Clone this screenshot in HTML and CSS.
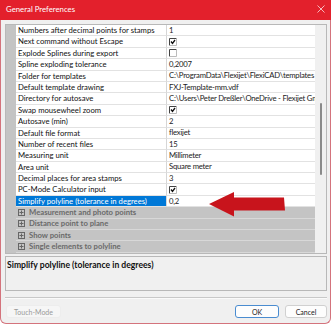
FILE: index.html
```html
<!DOCTYPE html>
<html lang="en">
  <head>
    <meta charset="UTF-8">
    <title>General Preferences</title>
    <link rel="stylesheet" href="styles.css">
  </head>
  <body>
    <div class="window">
        <div class="titlebar">
            <span>General Preferences</span>
            <svg class="close" width="8" height="8" viewBox="0 0 8 8"><path d="M0.5 0.5L7.5 7.5M7.5 0.5L0.5 7.5" stroke="#f6b8bd" stroke-width="1"/></svg>
        </div>
        <div class="content">
            <div class="grid">
                <div class="rows">
                    <div class="row"><div class="gut"></div><div class="name">Numbers after decimal points for stamps</div><div class="val">1</div></div>
                    <div class="row"><div class="gut"></div><div class="name">Next command without Escape</div><div class="val"><svg class="chk" width="8" height="8" viewBox="0 0 8 8"><path d="M0.5 7.5V0.5H7.5" stroke="#444" fill="none"/><path d="M7.5 0.5V7.5H0.5" stroke="#bbb" fill="none"/><path d="M2 3.5L3.5 5.5L6 2" stroke="#111" stroke-width="1.3" fill="none"/></svg></div></div>
                    <div class="row"><div class="gut"></div><div class="name">Explode Splines during export</div><div class="val"><svg class="chk" width="8" height="8" viewBox="0 0 8 8"><path d="M0.5 7.5V0.5H7.5" stroke="#444" fill="none"/><path d="M7.5 0.5V7.5H0.5" stroke="#bbb" fill="none"/></svg></div></div>
                    <div class="row"><div class="gut"></div><div class="name">Spline exploding tolerance</div><div class="val">0,2007</div></div>
                    <div class="row"><div class="gut"></div><div class="name">Folder for templates</div><div class="val">C:\ProgramData\Flexijet\FlexiCAD\templates</div></div>
                    <div class="row"><div class="gut"></div><div class="name">Default template drawing</div><div class="val">FXJ-Template-mm.vdf</div></div>
                    <div class="row"><div class="gut"></div><div class="name">Directory for autosave</div><div class="val">C:\Users\Peter Dreßler\OneDrive - Flexijet Gm</div></div>
                    <div class="row"><div class="gut"></div><div class="name">Swap mousewheel zoom</div><div class="val"><svg class="chk" width="8" height="8" viewBox="0 0 8 8"><path d="M0.5 7.5V0.5H7.5" stroke="#444" fill="none"/><path d="M7.5 0.5V7.5H0.5" stroke="#bbb" fill="none"/><path d="M2 3.5L3.5 5.5L6 2" stroke="#111" stroke-width="1.3" fill="none"/></svg></div></div>
                    <div class="row"><div class="gut"></div><div class="name">Autosave (min)</div><div class="val">2</div></div>
                    <div class="row"><div class="gut"></div><div class="name">Default file format</div><div class="val">flexijet</div></div>
                    <div class="row"><div class="gut"></div><div class="name">Number of recent files</div><div class="val">15</div></div>
                    <div class="row"><div class="gut"></div><div class="name">Measuring unit</div><div class="val">Millimeter</div></div>
                    <div class="row"><div class="gut"></div><div class="name">Area unit</div><div class="val">Square meter</div></div>
                    <div class="row"><div class="gut"></div><div class="name">Decimal places for area stamps</div><div class="val">3</div></div>
                    <div class="row"><div class="gut"></div><div class="name">PC-Mode Calculator input</div><div class="val"><svg class="chk" width="8" height="8" viewBox="0 0 8 8"><path d="M0.5 7.5V0.5H7.5" stroke="#444" fill="none"/><path d="M7.5 0.5V7.5H0.5" stroke="#bbb" fill="none"/><path d="M2 3.5L3.5 5.5L6 2" stroke="#111" stroke-width="1.3" fill="none"/></svg></div></div>
                    <div class="row selected"><div class="gut"></div><div class="name">Simplify polyline (tolerance in degrees)</div><div class="val">0,2</div></div>
                    <div class="row cat"><div class="gut"></div><div class="name"><svg class="plus" width="7" height="7" viewBox="0 0 7 7"><rect x="0.5" y="0.5" width="6" height="6" fill="none" stroke="#666"/><path d="M3.5 1.5V5.5M1.5 3.5H5.5" stroke="#666"/></svg>Measurement and photo points</div></div>
                    <div class="row cat"><div class="gut"></div><div class="name"><svg class="plus" width="7" height="7" viewBox="0 0 7 7"><rect x="0.5" y="0.5" width="6" height="6" fill="none" stroke="#666"/><path d="M3.5 1.5V5.5M1.5 3.5H5.5" stroke="#666"/></svg>Distance point to plane</div></div>
                    <div class="row cat"><div class="gut"></div><div class="name"><svg class="plus" width="7" height="7" viewBox="0 0 7 7"><rect x="0.5" y="0.5" width="6" height="6" fill="none" stroke="#666"/><path d="M3.5 1.5V5.5M1.5 3.5H5.5" stroke="#666"/></svg>Show points</div></div>
                    <div class="row cat"><div class="gut"></div><div class="name"><svg class="plus" width="7" height="7" viewBox="0 0 7 7"><rect x="0.5" y="0.5" width="6" height="6" fill="none" stroke="#666"/><path d="M3.5 1.5V5.5M1.5 3.5H5.5" stroke="#666"/></svg>Single elements to polyline</div></div>
                </div>
                <div class="scrollbar"><div class="thumb"></div></div>
            </div>
            <div class="desc">Simplify polyline (tolerance in degrees)</div>
            <div class="sep"></div>
            <div class="buttons">
                <div class="btn disabled">Touch-Mode</div>
                <div class="spacer"></div>
                <div class="btn default">OK</div>
                <div class="btn">Cancel</div>
            </div>
        </div>
        <svg class="arrow" width="78" height="27" viewBox="0 0 78 27"><path d="M1 13L26 1V6.5H76L77 19.5H26V25.5Z" fill="#c8141c"/></svg>
    </div>
  </body>
</html>
```

FILE: styles.css
```css
body {
    margin: 0;
    background: white;
    font-family: Lato, "Noto Sans", sans-serif;
    font-size: 7.7px;
}
.window {
    position: relative;
    width: 329px;
    height: 323px;
    background: #f0f0f0;
    border: 1px solid #d4737c;
    border-top: none;
    border-radius: 0 0 6px 6px;
    display: flex;
    flex-direction: column;
}
.titlebar {
    height: 20px;
    margin: 0 -1px;
    background: #e3202c;
    color: white;
    font-size: 7.8px;
    display: flex;
    align-items: center;
    justify-content: space-between;
    padding: 0 6px 2px 6px;
    box-sizing: border-box;
}
.content {
    flex: 1;
    display: flex;
    flex-direction: column;
    padding: 4px 3px 5px 4px;
}
.grid {
    display: flex;
    height: 230px;
    border: 1px solid #b8b8b8;
    background: white;
    box-sizing: border-box;
}
.rows {
    flex: 1;
    display: flex;
    flex-direction: column;
}
.row {
    display: grid;
    grid-template-columns: 10px 151px 1fr;
    height: 11.4px;
    line-height: 11px;
}
.gut {
    background: #c4c4c4;
}
.name {
    padding-left: 2px;
    border-bottom: 1px solid #e2e2e2;
    border-right: 1px solid #d6d6d6;
    color: #111;
    white-space: nowrap;
    overflow: hidden;
}
.val {
    padding-left: 2px;
    border-bottom: 1px solid #e2e2e2;
    color: #222;
    letter-spacing: -0.22px;
    white-space: nowrap;
    overflow: hidden;
    display: flex;
    align-items: center;
}
.chk {
    display: block;
}
.selected .name {
    background: #0078d7;
    color: white;
}
.cat {
    background: #c4c4c4;
}
.cat .name {
    grid-column: 2 / 4;
    border-right: none;
    border-bottom: 1px solid #d8d8d8;
    color: #6a6a6a;
    font-weight: bold;
    display: flex;
    align-items: center;
    gap: 4px;
}
.plus {
    display: block;
}
.scrollbar {
    width: 11px;
    background: #f0f0f0;
    position: relative;
}
.thumb {
    position: absolute;
    left: 5px;
    top: 78px;
    width: 2px;
    height: 72px;
    background: #8a8a8a;
    border-radius: 1px;
}
.desc {
    margin-top: 2px;
    height: 35px;
    border: 1px solid #b8b8b8;
    box-sizing: border-box;
    padding: 3px 1px;
    font-size: 8.6px;
    font-weight: bold;
    color: #111;
}
.sep {
    margin-top: 6px;
    border-top: 1px solid #c8c8c8;
    border-bottom: 1px solid #fafafa;
}
.buttons {
    margin-top: 6px;
    display: flex;
    gap: 6px;
    padding-left: 1px;
}
.spacer {
    flex: 1;
}
.btn {
    height: 13px;
    line-height: 12px;
    width: 42px;
    text-align: center;
    background: #fdfdfd;
    border: 1px solid #d0d0d0;
    border-radius: 3px;
    box-sizing: border-box;
    font-size: 7px;
    color: #222;
}
.btn.disabled {
    width: 55px;
    background: #f6f6f6;
    border-color: #ededed;
    color: #9a9a9a;
}
.btn.default {
    width: 44px;
    border: 1px solid #4a8cd0;
}
.arrow {
    position: absolute;
    left: 207px;
    top: 191px;
}
```
